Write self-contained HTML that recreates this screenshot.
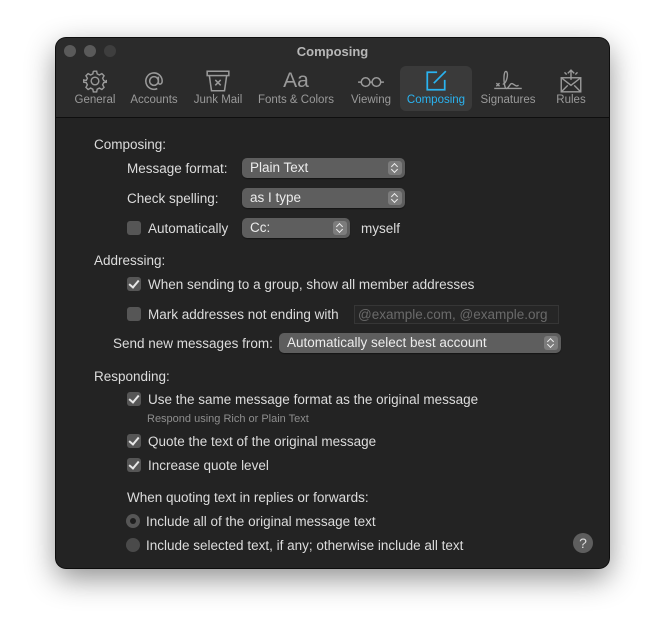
<!DOCTYPE html>
<html><head><meta charset="utf-8"><style>
*{margin:0;padding:0;box-sizing:border-box}
body{width:665px;height:643px;background:#fff;font-family:"Liberation Sans",sans-serif;position:relative;overflow:hidden}
.win{position:absolute;left:56px;top:38px;width:553px;height:530px;border-radius:10px;background:#232323;box-shadow:0 10px 30px rgba(0,0,0,.45),0 0 0 1px #111;overflow:hidden}
.tb{position:absolute;left:0;top:0;width:553px;height:80px;background:#2b2b2b;border-bottom:1px solid #0e0e0e}
.dot{position:absolute;top:7px;width:12px;height:12px;border-radius:50%;background:#5a5a5a}
.title{position:absolute;top:6px;left:0;width:553px;text-align:center;color:#b8b8b8;font-weight:bold;font-size:13px}
.it{position:absolute;top:28px;width:72px;height:45px;text-align:center;color:#9a9a9a;font-size:11.5px;white-space:nowrap}
.it svg{display:block;margin:3px auto 0;}
.it span{position:absolute;left:-10px;right:-10px;top:28px}
.sel{background:#3a3a3a;border-radius:6px;color:#2ab3f0}
.t{position:absolute;color:#dcdcdc;font-size:13.5px;white-space:nowrap;line-height:16px}
.s{font-size:11px;color:#8e8e8e}
.cb{position:absolute;width:14px;height:14px;border-radius:3px;background:#565656}
.cb.on::after{content:"";position:absolute;left:4px;top:1px;width:4px;height:8px;border:solid #e8e8e8;border-width:0 2px 2px 0;transform:rotate(40deg)}
.pop{position:absolute;height:20px;border-radius:5px;background:#5e5e5e;color:#ececec;font-size:13.5px;padding-left:8px;line-height:20px;box-shadow:0 1px 1px rgba(0,0,0,.4)}
.pop i{position:absolute;right:3px;top:3px;width:14px;height:14px;border-radius:3px;background:#7c7c7c;font-style:normal}
.pop i::before,.pop i::after{content:"";position:absolute;left:4px;width:4px;height:4px;border:solid #eee;border-width:1.5px 0 0 1.5px}
.pop i::before{top:3px;transform:rotate(45deg)}
.pop i::after{top:6px;transform:rotate(225deg)}
.rad{position:absolute;width:14px;height:14px;border-radius:50%;background:#565656}
</style></head><body>
<div class="win">
<div class="tb">
<div class="dot" style="left:8px"></div><div class="dot" style="left:28px"></div><div class="dot" style="left:48px;background:#3e3e3e"></div>
<div class="title">Composing</div>
<div class="it" style="left:3px"><svg width="24" height="24" viewBox="0 0 22 22" fill="none" stroke="#9a9a9a" stroke-width="1.3"><circle cx="11" cy="11" r="3.5"/><path d="M9.5 2h3l.5 2.5 2 1 2.3-1.3 2 2-1.3 2.3 1 2L21.5 12v-2M9.5 2l-.5 2.5-2 1-2.3-1.3-2 2 1.3 2.3-1 2L.5 10v2l2.5.5 1 2-1.3 2.3 2 2 2.3-1.3 2 1 .5 2.5h3l.5-2.5 2-1 2.3 1.3 2-2-1.3-2.3 1-2L21.5 12"/></svg><span>General</span></div>
<div class="it" style="left:62px"><svg width="24" height="24" viewBox="0 0 22 22" fill="none" stroke="#9a9a9a" stroke-width="1.4"><circle cx="11" cy="11" r="4"/><path d="M15 7v5.5c0 2 3.5 2 3.5-1.5A7.5 7.5 0 1 0 14 18"/></svg><span>Accounts</span></div>
<div class="it" style="left:126px"><svg width="26" height="24" viewBox="0 0 24 22" fill="none" stroke="#9a9a9a" stroke-width="1.4"><rect x="2" y="2" width="20" height="4"/><path d="M4 6l2 14h12l2-14M9.5 10l5 5M14.5 10l-5 5"/></svg><span>Junk Mail</span></div>
<div class="it" style="left:204px"><div style="font-size:21px;color:#9a9a9a;height:24px;line-height:28px;margin-top:1px">Aa</div><span>Fonts &amp; Colors</span></div>
<div class="it" style="left:279px"><svg width="28" height="24" viewBox="0 0 26 22" fill="none" stroke="#9a9a9a" stroke-width="1.4"><circle cx="8" cy="12" r="4"/><circle cx="18" cy="12" r="4"/><path d="M12 12h2M4 12H1M22 12h3"/></svg><span>Viewing</span></div>
<div class="it sel" style="left:344px"><svg width="24" height="24" viewBox="0 0 22 22" fill="none" stroke="#2ab3f0" stroke-width="1.6"><path d="M12 3H3v16h16v-9"/><path d="M9 13l11-11"/></svg><span>Composing</span></div>
<div class="it" style="left:416px"><svg width="36" height="24" viewBox="0 0 34 22" fill="none" stroke="#9a9a9a" stroke-width="1.3"><path d="M4 18h26M6 13l3 3M9 13l-3 3M12 14c4 0 6-12 3-12s-2 18 1 16 3-6 6-4 3 2 5 1"/></svg><span>Signatures</span></div>
<div class="it" style="left:479px"><svg width="26" height="24" viewBox="0 0 24 22" fill="none" stroke="#9a9a9a" stroke-width="1.3"><rect x="3" y="8" width="18" height="13"/><path d="M3 8l9 7 9-7M3 21l6-6M21 21l-6-6M12 10V2M9 4l3-3 3 3M6 3l2 2M18 3l-2 2"/></svg><span>Rules</span></div>
</div>
</div>

<div class="t" style="left:94px;top:137px">Composing:</div>
<div class="t" style="left:127px;top:161px">Message format:</div>
<div class="pop" style="left:242px;top:158px;width:163px">Plain Text<i></i></div>
<div class="t" style="left:127px;top:191px">Check spelling:</div>
<div class="pop" style="left:242px;top:188px;width:163px">as I type<i></i></div>
<div class="cb" style="left:127px;top:221px"></div>
<div class="t" style="left:148px;top:221px">Automatically</div>
<div class="pop" style="left:242px;top:218px;width:108px">Cc:<i></i></div>
<div class="t" style="left:361px;top:221px">myself</div>

<div class="t" style="left:94px;top:253px">Addressing:</div>
<div class="cb on" style="left:127px;top:277px"></div>
<div class="t" style="left:148px;top:277px">When sending to a group, show all member addresses</div>
<div class="cb" style="left:127px;top:307px"></div>
<div class="t" style="left:148px;top:307px">Mark addresses not ending with</div>
<div style="position:absolute;left:354px;top:305px;width:205px;height:19px;border:1px solid #363636;background:#262626;color:#6a6a6a;font-size:13.5px;padding-left:3px;line-height:17px;white-space:nowrap;overflow:hidden">@example.com, @example.org</div>
<div class="t" style="left:113px;top:336px">Send new messages from:</div>
<div class="pop" style="left:279px;top:333px;width:282px">Automatically select best account<i></i></div>

<div class="t" style="left:94px;top:369px">Responding:</div>
<div class="cb on" style="left:127px;top:392px"></div>
<div class="t" style="left:148px;top:392px">Use the same message format as the original message</div>
<div class="t s" style="left:147px;top:411px">Respond using Rich or Plain Text</div>
<div class="cb on" style="left:127px;top:434px"></div>
<div class="t" style="left:148px;top:434px">Quote the text of the original message</div>
<div class="cb on" style="left:127px;top:458px"></div>
<div class="t" style="left:148px;top:458px">Increase quote level</div>
<div class="t" style="left:127px;top:490px">When quoting text in replies or forwards:</div>
<div class="rad" style="left:126px;top:514px"><div style="position:absolute;left:4px;top:4px;width:6px;height:6px;border-radius:50%;background:#1e1e1e"></div></div>
<div class="t" style="left:146px;top:514px">Include all of the original message text</div>
<div class="rad" style="left:126px;top:538px;background:#4a4a4a"></div>
<div class="t" style="left:146px;top:538px">Include selected text, if any; otherwise include all text</div>
<div style="position:absolute;left:573px;top:533px;width:20px;height:20px;border-radius:50%;background:#5e5e5e;color:#ddd;font-size:14px;text-align:center;line-height:20px">?</div>
</body></html>
